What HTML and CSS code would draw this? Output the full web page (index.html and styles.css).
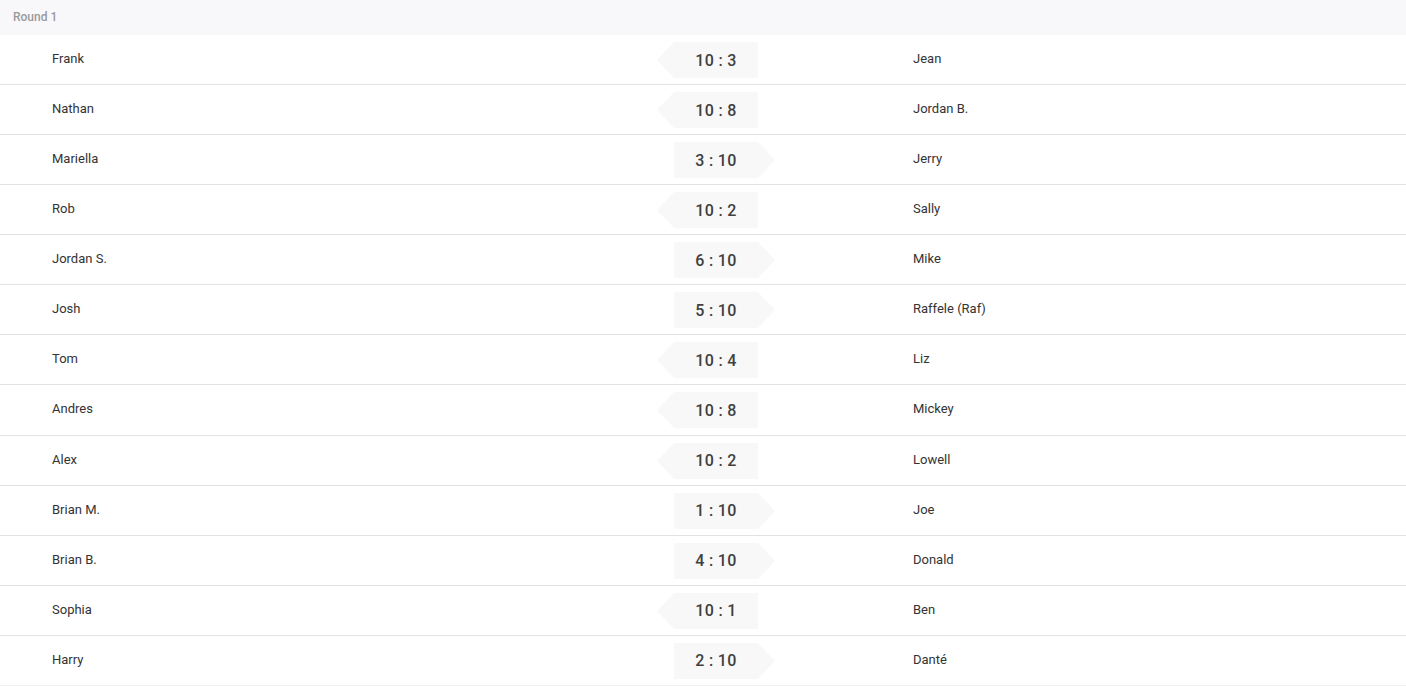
FILE: index.html
```html
<!DOCTYPE html>
<html>
<head>
<meta charset="utf-8">
<link rel="stylesheet" href="styles.css">
</head>
<body>
<div class="round">
  <div class="round-header">Round 1</div>
  <div class="match"><div class="team left">Frank</div><div class="score-cell"><div class="score win-left">10 : 3</div></div><div class="team right">Jean</div></div>
  <div class="match"><div class="team left">Nathan</div><div class="score-cell"><div class="score win-left">10 : 8</div></div><div class="team right">Jordan B.</div></div>
  <div class="match"><div class="team left">Mariella</div><div class="score-cell"><div class="score win-right">3 : 10</div></div><div class="team right">Jerry</div></div>
  <div class="match"><div class="team left">Rob</div><div class="score-cell"><div class="score win-left">10 : 2</div></div><div class="team right">Sally</div></div>
  <div class="match"><div class="team left">Jordan S.</div><div class="score-cell"><div class="score win-right">6 : 10</div></div><div class="team right">Mike</div></div>
  <div class="match"><div class="team left">Josh</div><div class="score-cell"><div class="score win-right">5 : 10</div></div><div class="team right">Raffele (Raf)</div></div>
  <div class="match"><div class="team left">Tom</div><div class="score-cell"><div class="score win-left">10 : 4</div></div><div class="team right">Liz</div></div>
  <div class="match"><div class="team left">Andres</div><div class="score-cell"><div class="score win-left">10 : 8</div></div><div class="team right">Mickey</div></div>
  <div class="match"><div class="team left">Alex</div><div class="score-cell"><div class="score win-left">10 : 2</div></div><div class="team right">Lowell</div></div>
  <div class="match"><div class="team left">Brian M.</div><div class="score-cell"><div class="score win-right">1 : 10</div></div><div class="team right">Joe</div></div>
  <div class="match"><div class="team left">Brian B.</div><div class="score-cell"><div class="score win-right">4 : 10</div></div><div class="team right">Donald</div></div>
  <div class="match"><div class="team left">Sophia</div><div class="score-cell"><div class="score win-left">10 : 1</div></div><div class="team right">Ben</div></div>
  <div class="match"><div class="team left">Harry</div><div class="score-cell"><div class="score win-right">2 : 10</div></div><div class="team right">Danté</div></div>
</div>
</body>
</html>
```
FILE: styles.css
```css
html, body {
  margin: 0;
  padding: 0;
  background: #ffffff;
  font-family: Roboto, "Liberation Sans", Arial, sans-serif;
}

.round {
  display: flex;
  flex-direction: column;
}

.round-header {
  height: 35px;
  flex: none;
  box-sizing: border-box;
  padding-left: 13px;
  padding-bottom: 1px;
  display: flex;
  align-items: center;
  background: #f8f8fa;
  color: #9a9a9a;
  font-size: 12px;
  font-weight: 500;
}

.match {
  display: grid;
  grid-template-columns: 656px 120px 1fr;
  align-items: center;
  height: 50.065px;
  flex: none;
  box-sizing: border-box;
  border-bottom: 1px solid #e2e2e2;
}

.match:last-child {
  border-bottom-color: #f0f0f0;
}

.team {
  font-size: 13px;
  color: #333333;
  padding-bottom: 2px;
}

.team.left {
  padding-left: 52px;
}

.team.right {
  padding-left: 137px;
}

.score-cell {
  display: flex;
  justify-content: center;
}

.score {
  position: relative;
  width: 84px;
  height: 36px;
  margin-top: 1px;
  background: #f8f8f8;
  color: #404040;
  font-size: 16px;
  font-weight: 500;
  display: flex;
  align-items: center;
  justify-content: center;
  letter-spacing: 0.3px;
}

.score::before {
  content: "";
  position: absolute;
  top: 0;
  width: 0;
  height: 0;
  border-top: 18px solid transparent;
  border-bottom: 18px solid transparent;
}

.score.win-left::before {
  left: -17px;
  border-right: 17px solid #f8f8f8;
}

.score.win-right::before {
  right: -17px;
  border-left: 17px solid #f8f8f8;
}
```
